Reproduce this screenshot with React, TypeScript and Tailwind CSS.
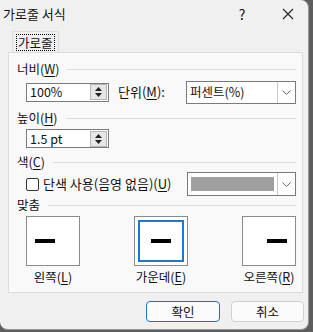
import React from 'react';

const font = { fontFamily: '"Noto Sans CJK KR", "Noto Sans", sans-serif' };

function U({ children }: { children: React.ReactNode }) {
  return <span className="underline underline-offset-2">{children}</span>;
}

function Section({ title, children }: { title: React.ReactNode; children?: React.ReactNode }) {
  return (
    <div>
      <div className="flex items-center gap-2 h-[18px]">
        <span>{title}</span>
        <div className="flex-1 h-px bg-[#dcdcdc]" />
      </div>
      {children}
    </div>
  );
}

function Spinner() {
  return (
    <div className="w-[17px] h-[16px] border border-[#b5b5b5] bg-[#e6e6e6] flex flex-col items-center justify-center gap-[2px]">
      <svg width="7" height="4" viewBox="0 0 7 4"><path d="M0 4 L3.5 0 L7 4Z" fill="#222" /></svg>
      <svg width="7" height="4" viewBox="0 0 7 4"><path d="M0 0 L3.5 4 L7 0Z" fill="#222" /></svg>
    </div>
  );
}

function NumInput({ value }: { value: string }) {
  return (
    <div className="w-[83px] h-[19px] border border-[#7a7a7a] bg-white flex items-center justify-between pl-[3px] pr-[1px]">
      <span>{value}</span>
      <Spinner />
    </div>
  );
}

function Chevron() {
  return (
    <div className="w-[18px] h-full border-l border-[#c8c8c8] flex items-center justify-center">
      <svg width="9" height="5" viewBox="0 0 9 5"><path d="M0.5 0.5 L4.5 4.5 L8.5 0.5" fill="none" stroke="#666" strokeWidth="1" /></svg>
    </div>
  );
}

function AlignBox({ label, pos, active }: { label: React.ReactNode; pos: string; active?: boolean }) {
  return (
    <div className="flex flex-col items-center">
      <div className={`w-[54px] h-[50px] border border-[#8a8a8a] bg-white flex items-center ${pos} ${active ? 'p-[3px]' : 'px-[8px]'}`}>
        {active ? (
          <div className="w-full h-full border-2 border-[#1979ca] flex items-center justify-center">
            <div className="w-[20px] h-[4px] bg-black" />
          </div>
        ) : (
          <div className="w-[20px] h-[4px] bg-black" />
        )}
      </div>
      <div className="mt-[3px]">{label}</div>
    </div>
  );
}

export default function App() {
  return (
    <div className="w-[313px] h-[332px] bg-[#5e5e5e] text-[12.5px] leading-[16px] text-[#111]" style={font}>
      <div className="w-[309px] h-[330px] bg-[#f0f0f0] rounded-b-[8px] rounded-tr-[8px] border-r border-b border-[#9a9a9a] flex flex-col">
        {/* Title bar */}
        <div className="h-[28px] flex items-center pl-[3px] text-[13px]">
          <span className="flex-1">가로줄 서식</span>
          <span className="w-[46px] text-center text-[14px]">?</span>
          <span className="w-[40px] ml-[3px] flex justify-center">
            <svg width="12" height="12" viewBox="0 0 12 12"><path d="M1 1 L11 11 M11 1 L1 11" stroke="#222" strokeWidth="1.1" /></svg>
          </span>
        </div>

        {/* Tab */}
        <div className="pl-[8px] pr-[5px] mt-[3px]">
          <div className="flex">
            <div className="ml-[4px] h-[21px] px-[3px] border border-b-0 border-[#dcdcdc] bg-[#f0f0f0] flex items-center">
              <span className="border border-dotted border-black px-[1px] leading-[15px]">가로줄</span>
            </div>
          </div>
          <div className="h-[241px] border border-[#dcdcdc] bg-[#f9f9f9] pl-[8px] pr-[6px] pt-[7px] flex flex-col">
            <Section title={<>너비(<U>W</U>)</>}>
              <div className="flex items-center pl-[9px] mt-[3px] h-[22px]">
                <NumInput value="100%" />
                <span className="ml-[9px] text-[13px]">단위(<U>M</U>):</span>
                <div className="ml-auto w-[110px] h-[23px] border border-[#7a7a7a] bg-white flex items-center">
                  <span className="flex-1 pl-[3px]">퍼센트(%)</span>
                  <Chevron />
                </div>
              </div>
            </Section>
            <div className="mt-[6px]">
              <Section title={<>높이(<U>H</U>)</>}>
                <div className="pl-[9px] mt-[2px]">
                  <NumInput value="1.5 pt" />
                </div>
              </Section>
            </div>
            <div className="mt-[5px]">
              <Section title={<>색(<U>C</U>)</>}>
                <div className="flex items-center pl-[9px] mt-[1px] h-[24px]">
                  <div className="w-[13px] h-[13px] border border-[#333] rounded-[2px] bg-white" />
                  <span className="ml-[4px] text-[13px]">단색 사용(음영 없음)(<U>U</U>)</span>
                  <div className="ml-auto w-[109px] h-[24px] border border-[#7a7a7a] bg-white flex items-center">
                    <div className="flex-1 h-[14px] mx-[3px] bg-[#a0a0a0]" />
                    <Chevron />
                  </div>
                </div>
              </Section>
            </div>
            <div className="mt-0">
              <Section title="맞춤">
                <div className="flex justify-between pl-[9px] mt-[2px]">
                  <AlignBox label={<>왼쪽(<U>L</U>)</>} pos="justify-start" />
                  <AlignBox label={<>가운데(<U>E</U>)</>} pos="justify-center" active />
                  <AlignBox label={<>오른쪽(<U>R</U>)</>} pos="justify-end" />
                </div>
              </Section>
            </div>
          </div>
        </div>

        {/* Buttons */}
        <div className="flex justify-end gap-[11px] pr-[4px] mt-[8px]">
          <button className="w-[74px] h-[21px] rounded-[4px] border border-[#1875c8] bg-[#fbfbfb]">확인</button>
          <button className="w-[73px] h-[21px] rounded-[4px] border border-[#d0d0d0] bg-[#fbfbfb]">취소</button>
        </div>
      </div>
    </div>
  );
}
